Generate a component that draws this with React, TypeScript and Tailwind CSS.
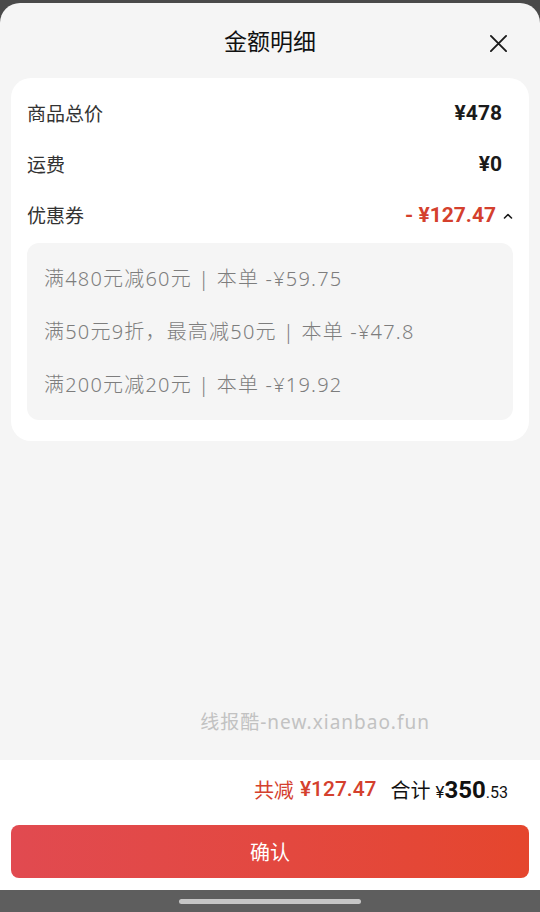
import React from "react";

const cjk = { fontFamily: '"Noto Sans CJK SC", "Noto Sans", sans-serif' };
const num = { fontFamily: 'Roboto, "Noto Sans CJK SC", sans-serif' };
const latin = { fontFamily: '"Noto Sans", "Noto Sans CJK SC", sans-serif' };

function Row({ label, value }: { label: string; value: string }) {
  return (
    <div className="flex h-[51px] items-center justify-between">
      <span className="text-[19px] text-[#333333]" style={cjk}>
        {label}
      </span>
      <span className="mr-[11px] text-[21px] font-bold text-[#1a1a1a]" style={num}>
        {value}
      </span>
    </div>
  );
}

const coupons = [
  "满480元减60元 | 本单 -¥59.75",
  "满50元9折，最高减50元 | 本单 -¥47.8",
  "满200元减20元 | 本单 -¥19.92",
];

export default function App() {
  return (
    <div className="flex h-[912px] w-[540px] flex-col bg-[#4a4a4a]" style={cjk}>
      <div className="h-[3px]"></div>
      <div className="flex flex-1 flex-col overflow-hidden rounded-t-[20px] bg-[#f5f5f5]">
        {/* header */}
        <div className="relative flex h-[75px] items-center justify-center">
          <h1 className="text-[23px] text-[#111111]">金额明细</h1>
          <svg
            className="absolute right-[32px] top-[31px]"
            width="19"
            height="19"
            viewBox="0 0 20 20"
            fill="none"
            stroke="#1a1a1a"
            strokeWidth="2"
            strokeLinecap="round"
          >
            <path d="M2 2 L18 18 M18 2 L2 18" />
          </svg>
        </div>

        {/* card */}
        <div className="mx-[11px] rounded-[20px] bg-white px-[16px] pt-[10px] pb-[21px]">
          <Row label="商品总价" value="¥478" />
          <Row label="运费" value="¥0" />
          <div className="flex h-[51px] items-center justify-between">
            <span className="text-[19px] text-[#333333]">优惠券</span>
            <div className="flex items-center">
              <span className="text-[21px] font-bold text-[#d4402d]" style={num}>
                - ¥127.47
              </span>
              <svg
                className="ml-[7px]"
                width="10"
                height="8"
                viewBox="0 0 10 8"
                fill="none"
                stroke="#1a1a1a"
                strokeWidth="1.6"
                strokeLinecap="round"
                strokeLinejoin="round"
              >
                <path d="M1.5 6 L5 2.5 L8.5 6" />
              </svg>
            </div>
          </div>
          <div className="mt-[2px] rounded-[12px] bg-[#f5f5f5] px-[17px] py-[9px]">
            {coupons.map((c) => (
              <div
                key={c}
                className="flex h-[53px] items-center text-[20px] font-light tracking-[1.2px] text-[#7d7d7d]"
                style={latin}
              >
                {c}
              </div>
            ))}
          </div>
        </div>

        {/* watermark */}
        <div className="flex flex-1 items-end justify-end pr-[110px] pb-[26px]">
          <span
            className="text-[19px] leading-[24px] tracking-[1px] text-[#c2c2c2]"
            style={latin}
          >
            线报酷-new.xianbao.fun
          </span>
        </div>

        {/* footer */}
        <div className="bg-white px-[11px] pb-[12px]">
          <div className="flex h-[60px] items-center justify-end pr-[21px]">
            <span className="text-[20px] text-[#d4402d]">共减</span>
            <span className="ml-[6px] text-[21px] font-medium text-[#d4402d]" style={num}>
              ¥127.47
            </span>
            <span className="ml-[14px] text-[20px] text-[#111111]">合计</span>
            <span className="ml-[5px] flex items-baseline text-[#111111]" style={num}>
              <span className="text-[17px]">¥</span>
              <span className="text-[24px] font-bold">350</span>
              <span className="text-[16px]">.53</span>
            </span>
          </div>
          <button className="mt-[5px] flex h-[53px] w-full items-center justify-center rounded-[8px] bg-gradient-to-r from-[#e14a50] to-[#e5462d] text-[20px] text-white">
            确认
          </button>
        </div>
      </div>
      <div className="flex h-[22px] items-center justify-center bg-[#5e5e5e]">
        <div className="h-[5px] w-[182px] rounded-full bg-[#c6c6c6]"></div>
      </div>
    </div>
  );
}
